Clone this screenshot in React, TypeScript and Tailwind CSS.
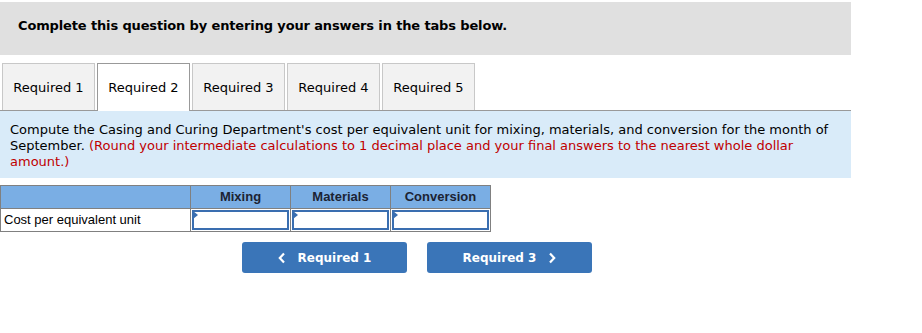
import React from "react";

const tabs = ["Required 1", "Required 2", "Required 3", "Required 4", "Required 5"];
const cols = ["Mixing", "Materials", "Conversion"];

const AnswerCell = () => (
	<td className="relative h-[23px] w-[100px] border border-[#808080] p-0">
		<div className="absolute inset-[1px] border-2 border-[#3a6eb0] bg-white" />
		<div className="absolute left-[2px] top-[2px] h-0 w-0 border-y-[4px] border-l-[5px] border-y-transparent border-l-[#3a6eb0]" />
	</td>
);

const App = () => {
	return (
		<div className="h-[333px] w-[922px] bg-white pt-[2px] font-['DejaVu_Sans',Verdana,sans-serif] text-[13px] text-black">
			<div className="h-[53px] w-[851px] bg-[#e0e0e0] pl-[18px] pt-[16px] font-bold leading-[16px] tracking-[-0.14px]">
				Complete this question by entering your answers in the tabs below.
			</div>

			<div className="mt-[8px] flex h-[48px] w-[851px] gap-[2px] border-b border-[#999] pl-[2px]">
				{tabs.map((t, i) => (
					<div
						key={t}
						className={
							i === 1
								? "-mb-px flex h-[48px] w-[93px] items-center justify-center border border-b-0 border-[#999] bg-white pt-px"
								: "flex h-[47px] w-[93px] items-center justify-center border border-b-0 border-[#c8c8c8] bg-[#f2f2f2] pt-[2px]"
						}
					>
						{t}
					</div>
				))}
			</div>

			<div className="h-[67px] w-[851px] bg-[#d9ebf9] px-[10px] pt-[11px] leading-[16px]">
				<p>
					Compute the Casing and Curing Department's cost per equivalent unit for mixing, materials, and conversion for the month of September.{" "}
					<span className="text-[#c00000]">
						(Round your intermediate calculations to 1 decimal place and your final answers to the nearest whole dollar amount.)
					</span>
				</p>
			</div>

			<table className="mt-[7px] border-collapse font-['Liberation_Sans',Arial,sans-serif] text-[13px]">
				<thead>
					<tr className="h-[23px] bg-[#7aaee4]">
						<th className="w-[190px] border border-[#808080]" />
						{cols.map((c) => (
							<th key={c} className="w-[100px] border border-[#808080] text-center font-bold text-[#1c2333]">
								{c}
							</th>
						))}
					</tr>
				</thead>
				<tbody>
					<tr>
						<td className="h-[23px] border border-[#808080] pl-[3px] text-left">Cost per equivalent unit</td>
						<AnswerCell />
						<AnswerCell />
						<AnswerCell />
					</tr>
				</tbody>
			</table>

			<div className="mt-[10px] flex gap-[20px] pl-[242px]">
				<button className="flex h-[31px] w-[165px] items-center justify-center gap-[12px] rounded-[3px] bg-[#3a75b8] text-[12px] font-bold text-white">
					<svg width="8" height="12" viewBox="0 0 8 12" fill="none">
						<path d="M6 1.5 1.8 6 6 10.5" stroke="white" strokeWidth="2.2" />
					</svg>
					Required 1
				</button>
				<button className="flex h-[31px] w-[165px] items-center justify-center gap-[12px] rounded-[3px] bg-[#3a75b8] text-[12px] font-bold text-white">
					Required 3
					<svg width="8" height="12" viewBox="0 0 8 12" fill="none">
						<path d="M2 1.5 6.2 6 2 10.5" stroke="white" strokeWidth="2.2" />
					</svg>
				</button>
			</div>
		</div>
	);
};

export default App;
